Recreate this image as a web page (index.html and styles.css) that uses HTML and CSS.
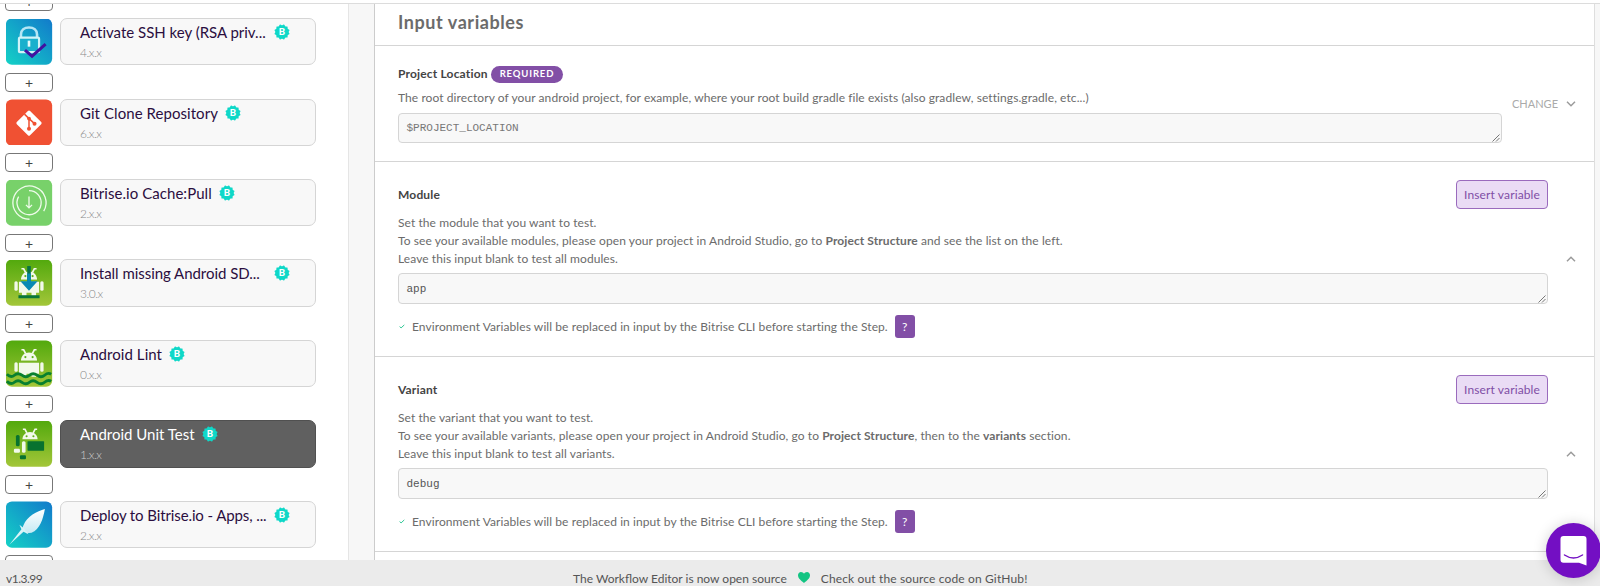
FILE: index.html
```html
<!DOCTYPE html>
<html lang="en">
<head>
    <meta charset="UTF-8">
    <meta name="viewport" content="width=device-width, initial-scale=1.0">
    <title>Workflow Editor</title>
    <link rel="stylesheet" href="styles.css">
</head>
<body>
    <!-- shared shapes -->
    <svg class="defs">
        <defs>
            <linearGradient id="blue" x1="0" y1="1" x2="1" y2="0">
                <stop offset="0" stop-color="#14d2c6"/>
                <stop offset="1" stop-color="#127acb"/>
            </linearGradient>
            <linearGradient id="green" x1="0" y1="0" x2="0" y2="1">
                <stop offset="0" stop-color="#52a90d"/>
                <stop offset="1" stop-color="#a3c639"/>
            </linearGradient>
            <linearGradient id="feather" x1="0" y1="0" x2="0" y2="1">
                <stop offset="0" stop-color="#fff"/>
                <stop offset="1" stop-color="#c5eaf3"/>
            </linearGradient>
        </defs>
        <symbol id="verified" viewBox="0 0 16 16">
            <g fill="#0fd8c8">
                <rect x="2.4" y="2.4" width="11.2" height="11.2" rx=".5"/>
                <rect x="2.4" y="2.4" width="11.2" height="11.2" rx=".5" transform="rotate(30 8 8)"/>
                <rect x="2.4" y="2.4" width="11.2" height="11.2" rx=".5" transform="rotate(60 8 8)"/>
            </g>
            <text x="8" y="11.400" text-anchor="middle" class="verified-b">B</text>
        </symbol>
        <symbol id="robot-head" viewBox="0 0 18 12">
            <path d="M1 12C1 7.500 4.500 4 9 4s8 3.500 8 8z" fill="#f2f9ea"/>
            <path d="M1.500 1.200h2.200L5.700 5M16.500 1.200h-2.200L12.300 5" fill="none" stroke="#f2f9ea" stroke-width="1.700"/>
            <circle cx="5.400" cy="8.500" r="1.100" fill="#5faf18"/>
            <circle cx="12.600" cy="8.500" r="1.100" fill="#5faf18"/>
        </symbol>
        <symbol id="robot-body" viewBox="0 0 46 46">
            <g fill="#f2f9ea">
                <path d="M13 22h20v11H13z"/>
                <rect x="8.500" y="21.500" width="3.300" height="9.500" rx="1.500"/>
                <rect x="34.200" y="21.500" width="3.300" height="9.500" rx="1.500"/>
                <path d="M16 32h4.500v4H16zM25.500 32H30v4h-4.500z"/>
            </g>
        </symbol>
        <symbol id="down" viewBox="0 0 10 6">
            <path d="M1 .8l4 4 4-4" fill="none" stroke="#9b9b9b" stroke-width="1.500"/>
        </symbol>
        <symbol id="up" viewBox="0 0 10 6">
            <path d="M1 5.200l4-4 4 4" fill="none" stroke="#9b9b9b" stroke-width="1.500"/>
        </symbol>
        <symbol id="grip" viewBox="0 0 8 8">
            <path d="M.5 7.500l7-7M4 7.500L7.500 4" fill="none" stroke="#777" stroke-width="1"/>
        </symbol>
        <symbol id="check" viewBox="0 0 6 5">
            <path d="M.6 2.600l1.500 1.300L5.300.9" fill="none" stroke="#2fc795" stroke-width="1"/>
        </symbol>
    </svg>

    <div class="editor">
        <div class="steps">
            <button class="add">+</button>

            <div class="step">
                <svg class="step-icon" viewBox="0 0 46 46">
                    <rect width="46" height="46" rx="6" fill="url(#blue)"/>
                    <path d="M15 19v-3c0-4.500 3.500-7 8-7s8 2.500 8 7v3" fill="none" stroke="#b5e6f5" stroke-width="2.600"/>
                    <rect x="13" y="19" width="20" height="14.500" rx="1" fill="#19b0cd" stroke="#d0f3f8" stroke-width="2.200"/>
                    <path d="M23 22v6" stroke="#e5fafb" stroke-width="2.600"/>
                    <path d="M19 31.500l7 6L39.500 25.500" fill="none" stroke="#4112a0" stroke-width="3"/>
                </svg>
                <div class="card">
                    <div class="name"><span class="ssh">Activate SSH key (RSA priv...</span><svg class="badge end"><use href="#verified"/></svg></div>
                    <div class="version">4.x.x</div>
                </div>
            </div>
            <button class="add">+</button>

            <div class="step">
                <svg class="step-icon" viewBox="0 0 46 46">
                    <rect width="46" height="46" rx="6" fill="#f05133"/>
                    <rect x="13.700" y="14.200" width="18.600" height="18.600" rx="1.500" fill="#fff" transform="rotate(45 23 23.500)"/>
                    <path d="M18.500 14.500L23 19v10M23 19l5.500 5" fill="none" stroke="#f05133" stroke-width="1.500"/>
                    <circle cx="23" cy="19" r="1.900" fill="#f05133"/>
                    <circle cx="23" cy="29" r="2" fill="#f05133"/>
                    <circle cx="28.500" cy="24" r="2" fill="#f05133"/>
                </svg>
                <div class="card">
                    <div class="name"><span>Git Clone Repository</span><svg class="badge"><use href="#verified"/></svg></div>
                    <div class="version">6.x.x</div>
                </div>
            </div>
            <button class="add">+</button>

            <div class="step">
                <svg class="step-icon" viewBox="0 0 46 46">
                    <rect width="46" height="46" rx="6" fill="#78d16a"/>
                    <g fill="none" stroke="#eefbea" stroke-width="1.300">
                        <path d="M23.500 39.500A16.500 16.500 0 1 1 37.600 31.500"/>
                        <path d="M23 11a12 12 0 1 1-10.300 6"/>
                        <path d="M23 17v11M20 25.200l3 3 3-3"/>
                    </g>
                </svg>
                <div class="card">
                    <div class="name"><span>Bitrise.io Cache:Pull</span><svg class="badge"><use href="#verified"/></svg></div>
                    <div class="version">2.x.x</div>
                </div>
            </div>
            <button class="add">+</button>

            <div class="step">
                <svg class="step-icon" viewBox="0 0 46 46">
                    <rect width="46" height="46" rx="6" fill="url(#green)"/>
                    <use href="#robot-head" x="14" y="8" width="18" height="12"/>
                    <use href="#robot-body" width="46" height="46"/>
                    <path d="M12.500 35.500h21v3h-21z" fill="#08763a"/>
                    <path d="M21.200 6.500h3.600V22h-3.600z" fill="#087345"/>
                    <path d="M21.200 14h3.600v7.500h6.700L23 31l-8.500-9.500h6.700z" fill="#0789b3"/>
                </svg>
                <div class="card">
                    <div class="name"><span class="sdk">Install missing Android SD...</span><svg class="badge end"><use href="#verified"/></svg></div>
                    <div class="version">3.0.x</div>
                </div>
            </div>
            <button class="add">+</button>

            <div class="step">
                <svg class="step-icon" viewBox="0 0 46 46">
                    <rect width="46" height="46" rx="6" fill="url(#green)"/>
                    <use href="#robot-head" x="14" y="8" width="18" height="12"/>
                    <use href="#robot-body" width="46" height="46"/>
                    <path d="M1 33.500q4 4 7.500 1t7.500 0 7.500 0 7.500 0 7.500 0 6.500-1M1 40.500q4 4 7.500 1t7.500 0 7.500 0 7.500 0 7.500 0 6.500-1" fill="none" stroke="#08802f" stroke-width="2.800"/>
                </svg>
                <div class="card">
                    <div class="name"><span>Android Lint</span><svg class="badge"><use href="#verified"/></svg></div>
                    <div class="version">0.x.x</div>
                </div>
            </div>
            <button class="add">+</button>

            <div class="step">
                <svg class="step-icon" viewBox="0 0 46 46">
                    <rect width="46" height="46" rx="6" fill="url(#green)"/>
                    <use href="#robot-head" x="15.500" y="7.500" width="17" height="11.500"/>
                    <g fill="#08722f">
                        <rect x="10" y="14.500" width="3.700" height="11" rx="1.500"/>
                        <rect x="21.500" y="20.500" width="16.500" height="9.500" rx=".6"/>
                        <rect x="14" y="34.500" width="6" height="4" rx="1"/>
                    </g>
                    <rect x="16" y="20.500" width="3.600" height="11.500" rx="1.500" fill="#f2f9ea"/>
                    <rect x="8" y="28" width="6" height="4" rx="1.200" fill="#f2f9ea"/>
                </svg>
                <div class="card selected">
                    <div class="name"><span class="ssh">Android Unit Test</span><svg class="badge"><use href="#verified"/></svg></div>
                    <div class="version">1.x.x</div>
                </div>
            </div>
            <button class="add">+</button>

            <div class="step">
                <svg class="step-icon" viewBox="0 0 46 46">
                    <rect width="46" height="46" rx="6" fill="url(#blue)"/>
                    <path d="M38.800 7.500C31 9.500 21 15 17.500 23.500l-1.500 4 3 .5 1.500 3.500 5-.5C34 28 37 17 38.800 7.500z" fill="url(#feather)"/>
                    <path d="M13.500 23l2 4.500L3.500 43 17.500 30l5 2.500-3.500-5z" fill="#d8f4f7"/>
                </svg>
                <div class="card">
                    <div class="name"><span class="deploy">Deploy to Bitrise.io - Apps, ...</span><svg class="badge end"><use href="#verified"/></svg></div>
                    <div class="version">2.x.x</div>
                </div>
            </div>
            <button class="add">+</button>
        </div>

        <div class="panel">
            <h2>Input variables</h2>

            <div class="row location">
                <div class="field">
                    <div class="label"><strong>Project Location</strong><span class="required">REQUIRED</span></div>
                    <p class="desc">The root directory of your android project, for example, where your root build gradle file exists (also gradlew, settings.gradle, etc...)</p>
                    <div class="input muted">$PROJECT_LOCATION<svg class="grip"><use href="#grip"/></svg></div>
                </div>
                <div class="toggle"><span>CHANGE</span><svg class="arrow"><use href="#down"/></svg></div>
            </div>

            <div class="row open">
                <div class="field">
                    <div class="label"><strong>Module</strong><button class="insert">Insert variable</button></div>
                    <p class="desc">Set the module that you want to test.<br>To see your available modules, please open your project in Android Studio, go to <b>Project Structure</b> and see the list on the left.<br>Leave this input blank to test all modules.</p>
                    <div class="input">app<svg class="grip"><use href="#grip"/></svg></div>
                    <div class="note"><svg class="check"><use href="#check"/></svg><span>Environment Variables will be replaced in input by the Bitrise CLI before starting the Step.</span><button class="help">?</button></div>
                </div>
                <div class="toggle"><svg class="arrow"><use href="#up"/></svg></div>
            </div>

            <div class="row open">
                <div class="field">
                    <div class="label"><strong>Variant</strong><button class="insert">Insert variable</button></div>
                    <p class="desc">Set the variant that you want to test.<br>To see your available variants, please open your project in Android Studio, go to <b>Project Structure</b>, then to the <b>variants</b> section.<br>Leave this input blank to test all variants.</p>
                    <div class="input">debug<svg class="grip"><use href="#grip"/></svg></div>
                    <div class="note"><svg class="check"><use href="#check"/></svg><span>Environment Variables will be replaced in input by the Bitrise CLI before starting the Step.</span><button class="help">?</button></div>
                </div>
                <div class="toggle"><svg class="arrow"><use href="#up"/></svg></div>
            </div>
        </div>
    </div>

    <footer>
        <span class="app-version">v1.3.99</span>
        <div class="source">
            <span>The Workflow Editor is now open source</span>
            <svg class="heart" viewBox="0 0 12 11"><path d="M6 11C3 8.500 0 6.200 0 3.200 0 1.300 1.300 0 3 0c1.300 0 2.400.7 3 1.800C6.600.7 7.700 0 9 0c1.700 0 3 1.300 3 3.200 0 3-3 5.300-6 7.800z" fill="#12c482"/></svg>
            <span class="github">Check out the source code on GitHub!</span>
        </div>
    </footer>

    <button class="chat">
        <svg viewBox="0 0 27 30">
            <path d="M3.500 0h20A3 3 0 0 1 26.500 3v26.500L19 26.700H3.500a3 3 0 0 1-3-3V3a3 3 0 0 1 3-3z" fill="#fff"/>
            <path d="M4.500 19q9 6 18 0" fill="none" stroke="#730fc3" stroke-width="1.500" stroke-linecap="round"/>
        </svg>
    </button>
</body>
</html>
```
FILE: styles.css
```css
* {
    box-sizing: border-box;
}
body {
    margin: 0;
    height: 586px;
    overflow: hidden;
    display: flex;
    flex-direction: column;
    background-color: white;
    color: #6b6b6b;
    font-family: Lato, sans-serif;
    font-size: 12px;
}
button {
    font-family: inherit;
    padding: 0;
}
.defs {
    position: absolute;
    width: 0;
    height: 0;
}
.editor {
    margin-top: 3px;
    height: 557px;
    border-top: 1px solid #dcdcdc;
    display: flex;
    background-color: #f7f7f7;
    overflow: hidden;
}

/* workflow steps */
.steps {
    width: 349px;
    flex: none;
    padding-left: 5px;
    background-color: white;
    border-right: 1px solid #e5e5e5;
    margin-top: -11.500px;
}
.add {
    display: block;
    width: 48px;
    height: 18.700px;
    border: 1px solid #777;
    border-radius: 4px;
    background-color: white;
    color: #444;
    font-size: 14px;
    line-height: 15px;
}
.step {
    display: flex;
    gap: 7px;
    margin: 7px 0 7.450px;
    height: 47.300px;
}
.step-icon {
    width: 48px;
    height: 47.300px;
    padding: .5px;
}
.card {
    width: 256px;
    border: 1px solid #d5d5d5;
    border-radius: 7px;
    background-color: #f8f8f8;
    padding: 3px 25px 0 19px;
}
.name {
    display: flex;
    align-items: center;
    gap: 7px;
    height: 20px;
    color: #2b0e3f;
    font-size: 15px;
    letter-spacing: .06px;
    white-space: nowrap;
}
.ssh {
    letter-spacing: -.01px;
}
.sdk {
    letter-spacing: -.04px;
}
.deploy {
    letter-spacing: -.11px;
}
.badge {
    width: 16px;
    height: 16px;
    flex: none;
}
.badge.end {
    margin-left: auto;
}
.verified-b {
    fill: white;
    font-family: Lato, sans-serif;
    font-size: 9.500px;
    font-weight: 900;
    letter-spacing: 0;
}
.version {
    margin-top: 2px;
    color: #888;
    font-size: 12px;
    font-weight: 300;
    line-height: 17px;
    letter-spacing: -.5px;
}
.selected {
    background-color: #606060;
    border-color: #505050;
}
.selected .name {
    color: white;
}
.selected .version {
    color: #ccc;
}

/* step inputs */
.panel {
    width: 1221px;
    margin-left: 25px;
    border-left: 1px solid #ccc;
    border-right: 1px solid #dedede;
    background-color: white;
}
h2 {
    margin: 0;
    height: 42px;
    padding: 7px 0 0 23px;
    border-bottom: 1px solid #d5d5d5;
    font-size: 18px;
    line-height: 22px;
    letter-spacing: .57px;
}
.row {
    display: flex;
    padding-left: 23px;
    border-bottom: 1px solid #d5d5d5;
}
.location {
    height: 116px;
}
.open {
    height: 195px;
}
.field {
    width: 1150px;
}
.location .field {
    width: 1104px;
}
.label {
    display: flex;
    align-items: center;
    gap: 3px;
    height: 17px;
    margin-top: 19.500px;
    color: #444;
    letter-spacing: .17px;
}
.location strong {
    margin-top: -2px;
}
.open .label {
    height: 29px;
    margin-top: 18px;
    justify-content: space-between;
}
.required {
    height: 17px;
    padding: 0 9px;
    border-radius: 9px;
    background-color: #824fa6;
    color: white;
    font-size: 9.500px;
    font-weight: bold;
    line-height: 16px;
    letter-spacing: .85px;
}
.insert {
    width: 92px;
    height: 29px;
    border: 1px solid #9a6bbd;
    border-radius: 4px;
    background-color: #eadcf5;
    color: #804ea5;
    font-size: 12px;
    letter-spacing: .13px;
}
.desc {
    margin: 6px 0 6.500px;
    line-height: 17.800px;
    letter-spacing: .08px;
}
.input {
    display: flex;
    align-items: center;
    justify-content: space-between;
    height: 30.500px;
    padding: 0 1px 0 7.500px;
    border: 1px solid #d5d5d5;
    border-radius: 4px;
    background-color: #f8f8f8;
    color: #555;
    font-family: "Liberation Mono", monospace;
    font-size: 11px;
}
.muted {
    color: #777;
}
.grip {
    width: 8px;
    height: 8px;
    align-self: flex-end;
}
.note {
    display: flex;
    align-items: center;
    height: 23px;
    margin-top: 11px;
    letter-spacing: .08px;
}
.check {
    width: 6px;
    height: 5px;
    margin: 0 7px 0 1px;
}
.help {
    width: 20px;
    height: 23px;
    margin-left: 7px;
    border: none;
    border-radius: 3px;
    background-color: #824fa6;
    color: white;
    font-size: 12px;
}
.open .desc {
    margin: 5px 0 6px;
}
.toggle {
    display: flex;
    align-items: center;
    gap: 8px;
    margin-left: 18px;
    color: #aaa;
    font-size: 11px;
}
.location .toggle {
    margin-left: 10px;
}
.arrow {
    width: 10px;
    height: 6px;
}

footer {
    height: 26px;
    padding-top: 10px;
    display: grid;
    grid-template-columns: 573px 1fr;
    background-color: #ebebeb;
    color: #555;
    line-height: 17px;
}
.app-version {
    padding-left: 6px;
    letter-spacing: -.5px;
}
.source {
    display: flex;
    gap: 11px;
    white-space: nowrap;
}
.github {
    letter-spacing: .14px;
}
.heart {
    width: 12px;
    height: 11px;
    margin-top: 2px;
}

/* floats over the page corner */
.chat {
    position: absolute;
    right: -1px;
    bottom: 8px;
    width: 55px;
    height: 55px;
    padding-top: 4px;
    border: none;
    border-radius: 50%;
    background-color: #730fc3;
    box-shadow: 0 1px 14px rgba(0, 0, 0, .18);
}
.chat svg {
    width: 27px;
    height: 30px;
}
```
